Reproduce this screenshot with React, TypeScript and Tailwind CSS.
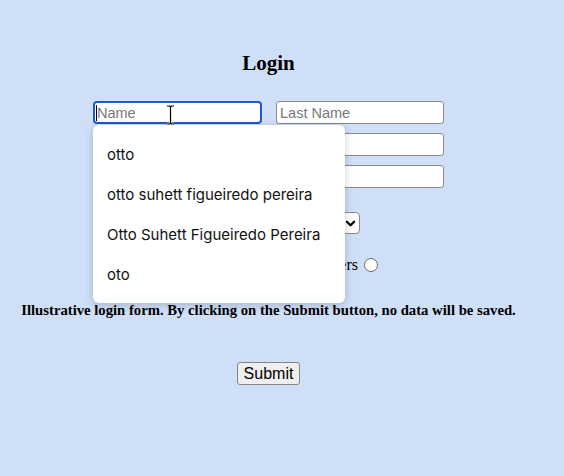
import React from 'react';

const suggestions = [
  'otto',
  'otto suhett figueiredo pereira',
  'Otto Suhett Figueiredo Pereira',
  'oto',
];

const baseInput =
  "h-[23px] bg-white text-[14.5px] text-black placeholder:text-[#777] outline-none font-['Liberation_Sans',Arial,sans-serif]";
const plainInput = baseInput + ' border border-[#8a8a8a] rounded-[3px] px-[3px]';
const focusedInput = baseInput + ' border-2 border-[#1a5bc8] rounded-[4px] px-[2px]';

const App: React.FC = () => {
  return (
    <div className="min-h-screen w-full bg-[#cfdff8] font-['Liberation_Serif','Times_New_Roman',serif] text-black">
      <div className="relative w-[537px] flex flex-col items-center pt-[51px]">
        <h2 className="text-[21px] font-bold leading-[24px]">Login</h2>

        <form className="w-[351px] mt-[26px] flex flex-col" onSubmit={(e) => e.preventDefault()}>
          <div className="flex gap-[14px]">
            <input className={focusedInput + ' w-[169px]'} placeholder="Name" />
            <input className={plainInput + ' w-[168px]'} placeholder="Last Name" />
          </div>
          <input className={plainInput + ' w-full mt-[9px]'} />
          <input className={plainInput + ' w-full mt-[9px]'} type="password" />

          <div className="flex items-center justify-end w-[267px] mt-[24px] h-[22px]">
            <div className="relative w-[150px] h-[22px] bg-white border border-[#8a8a8a] rounded-[4px]">
              <svg className="absolute right-[3px] top-[5px]" width="11" height="11" viewBox="0 0 12 12">
                <path d="M2 4l4 4 4-4" fill="none" stroke="#000" strokeWidth="2.4" strokeLinecap="round" strokeLinejoin="round" />
              </svg>
            </div>
          </div>

          <div className="w-[285px] flex justify-end items-center gap-[6px] mt-[21px] text-[16px] leading-[20px]">
            <span>Others</span>
            <span className="w-[14px] h-[14px] rounded-full border border-[#6d6d6d] bg-white" />
          </div>
        </form>

        <p className="mt-[24px] text-[14.7px] font-bold whitespace-nowrap">
          Illustrative login form. By clicking on the Submit button, no data will be saved.
        </p>

        <button
          type="button"
          className="mt-[41px] h-[23px] px-[6px] bg-[#efefef] border border-[#858585] rounded-[3px] text-[16px] leading-[21px] font-['Liberation_Sans',Arial,sans-serif]"
        >
          Submit
        </button>

        {/* caret in focused field */}
        <div className="absolute left-[96px] top-[105px] w-[1px] h-[16px] bg-black" />

        {/* I-beam mouse cursor */}
        <svg className="absolute left-[166px] top-[105px]" width="9" height="20" viewBox="0 0 9 20">
          <path d="M1 1h2.5l1 1 1-1H8M4.5 2v16M1 19h2.5l1-1 1 1H8" fill="none" stroke="#fff" strokeWidth="2.5" />
          <path d="M1 1h2.5l1 1 1-1H8M4.5 2v16M1 19h2.5l1-1 1 1H8" fill="none" stroke="#000" strokeWidth="1.2" />
        </svg>

        {/* autofill dropdown */}
        <div className="absolute left-[93px] top-[125px] w-[252px] h-[178px] bg-white rounded-[6px] shadow-[0_2px_8px_rgba(0,0,0,0.2)] pt-[10px] font-['Inter','Noto_Sans',sans-serif] text-[15px] text-[#111]">
          {suggestions.map((s) => (
            <div key={s} className="h-[40px] flex items-center pl-[14px]">
              {s}
            </div>
          ))}
        </div>
      </div>
    </div>
  );
};

export default App;
